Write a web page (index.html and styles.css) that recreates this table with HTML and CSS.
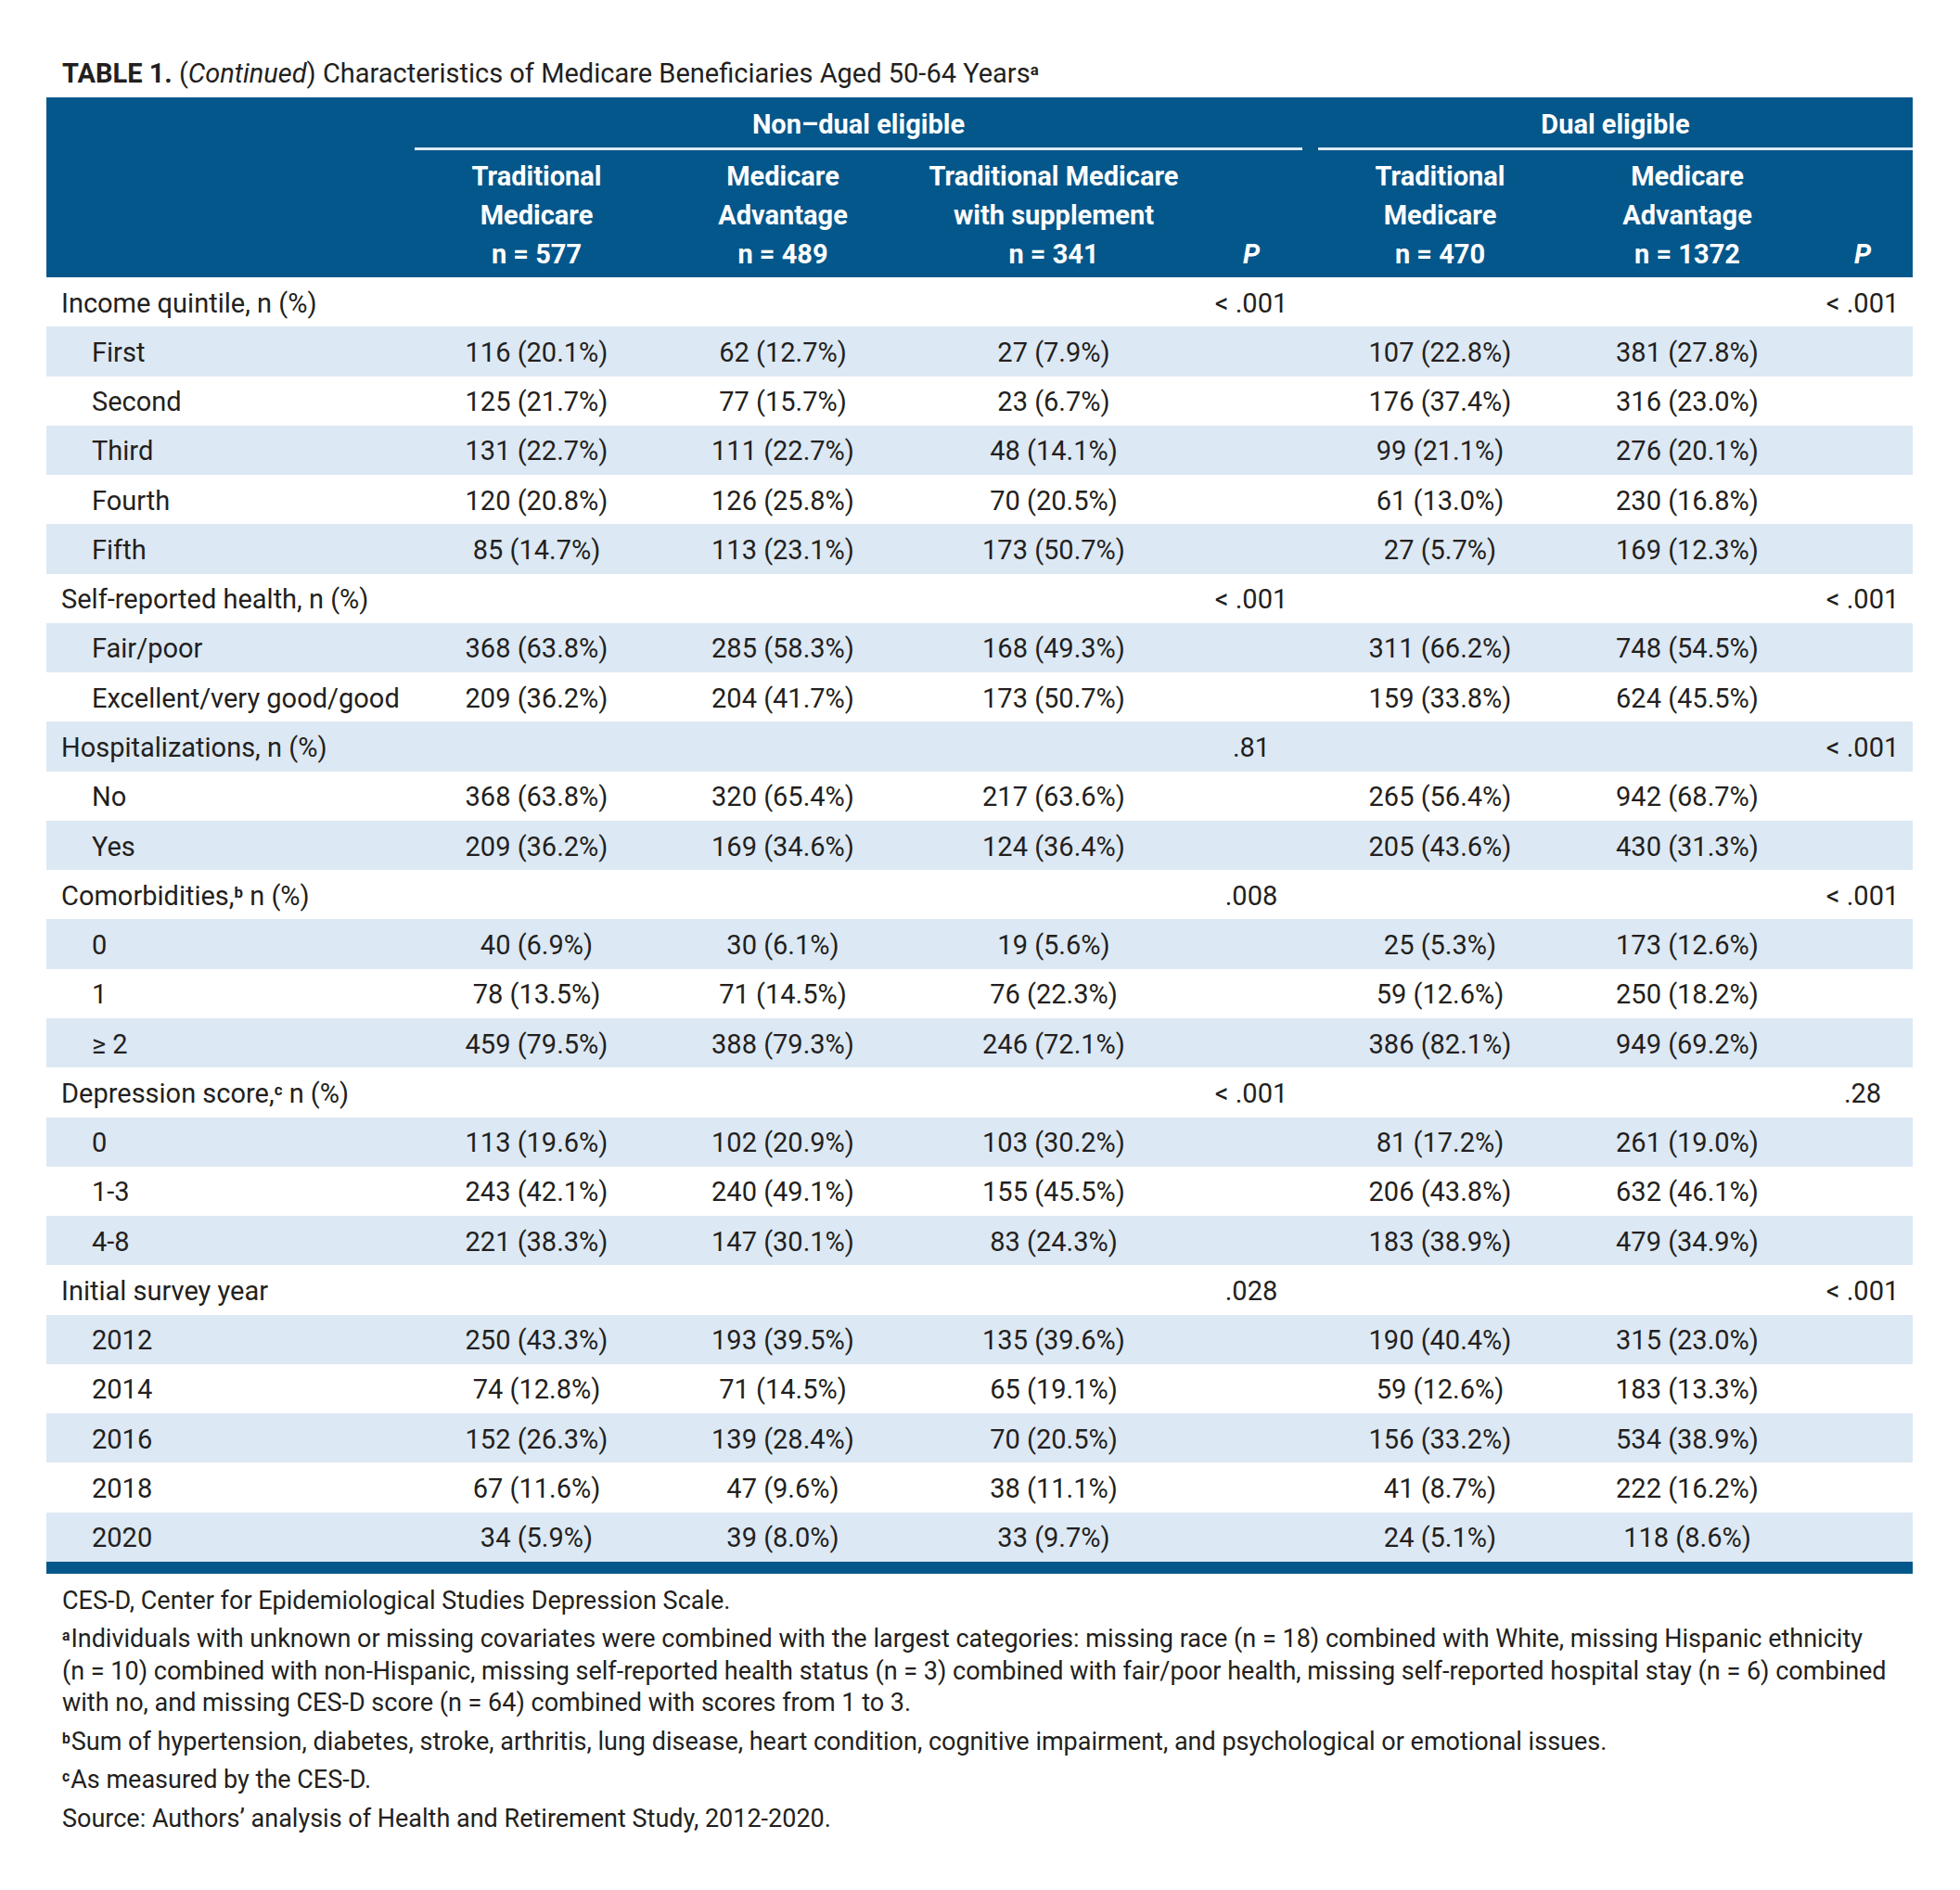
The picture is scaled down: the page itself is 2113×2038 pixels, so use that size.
FILE: index.html
```html
<!DOCTYPE html>
<html lang="en">
<head>
<meta charset="utf-8">
<title>Table 1 (Continued)</title>
<link rel="stylesheet" href="styles.css">
</head>
<body>
<div class="page">
  <p class="caption"><span class="tag">TABLE 1.</span> (<em>Continued</em>) Characteristics of Medicare Beneficiaries Aged 50-64 Years<sup>a</sup></p>
  <table class="data">
    <colgroup>
      <col class="c-label"><col class="c-tm"><col class="c-ma"><col class="c-tms"><col class="c-p1"><col class="c-gap"><col class="c-tm2"><col class="c-ma2"><col class="c-p2">
    </colgroup>
    <thead>
      <tr class="groups">
        <th></th>
        <th colspan="4" class="group">Non–dual eligible</th>
        <th></th>
        <th colspan="3" class="group">Dual eligible</th>
      </tr>
      <tr class="cols">
        <th></th>
        <th>Traditional<br>Medicare<br>n = 577</th>
        <th>Medicare<br>Advantage<br>n = 489</th>
        <th>Traditional Medicare<br>with supplement<br>n = 341</th>
        <th class="p"><em>P</em></th>
        <th></th>
        <th>Traditional<br>Medicare<br>n = 470</th>
        <th>Medicare<br>Advantage<br>n = 1372</th>
        <th class="p"><em>P</em></th>
      </tr>
    </thead>
    <tbody>
      <tr class="cat"><td>Income quintile, n (%)</td><td></td><td></td><td></td><td>&lt; .001</td><td></td><td></td><td></td><td>&lt; .001</td></tr>
      <tr><td>First</td><td>116 (20.1%)</td><td>62 (12.7%)</td><td>27 (7.9%)</td><td></td><td></td><td>107 (22.8%)</td><td>381 (27.8%)</td><td></td></tr>
      <tr><td>Second</td><td>125 (21.7%)</td><td>77 (15.7%)</td><td>23 (6.7%)</td><td></td><td></td><td>176 (37.4%)</td><td>316 (23.0%)</td><td></td></tr>
      <tr><td>Third</td><td>131 (22.7%)</td><td>111 (22.7%)</td><td>48 (14.1%)</td><td></td><td></td><td>99 (21.1%)</td><td>276 (20.1%)</td><td></td></tr>
      <tr><td>Fourth</td><td>120 (20.8%)</td><td>126 (25.8%)</td><td>70 (20.5%)</td><td></td><td></td><td>61 (13.0%)</td><td>230 (16.8%)</td><td></td></tr>
      <tr><td>Fifth</td><td>85 (14.7%)</td><td>113 (23.1%)</td><td>173 (50.7%)</td><td></td><td></td><td>27 (5.7%)</td><td>169 (12.3%)</td><td></td></tr>
      <tr class="cat"><td>Self-reported health, n (%)</td><td></td><td></td><td></td><td>&lt; .001</td><td></td><td></td><td></td><td>&lt; .001</td></tr>
      <tr><td>Fair/poor</td><td>368 (63.8%)</td><td>285 (58.3%)</td><td>168 (49.3%)</td><td></td><td></td><td>311 (66.2%)</td><td>748 (54.5%)</td><td></td></tr>
      <tr><td>Excellent/very good/good</td><td>209 (36.2%)</td><td>204 (41.7%)</td><td>173 (50.7%)</td><td></td><td></td><td>159 (33.8%)</td><td>624 (45.5%)</td><td></td></tr>
      <tr class="cat"><td>Hospitalizations, n (%)</td><td></td><td></td><td></td><td>.81</td><td></td><td></td><td></td><td>&lt; .001</td></tr>
      <tr><td>No</td><td>368 (63.8%)</td><td>320 (65.4%)</td><td>217 (63.6%)</td><td></td><td></td><td>265 (56.4%)</td><td>942 (68.7%)</td><td></td></tr>
      <tr><td>Yes</td><td>209 (36.2%)</td><td>169 (34.6%)</td><td>124 (36.4%)</td><td></td><td></td><td>205 (43.6%)</td><td>430 (31.3%)</td><td></td></tr>
      <tr class="cat"><td>Comorbidities,<sup>b</sup> n (%)</td><td></td><td></td><td></td><td>.008</td><td></td><td></td><td></td><td>&lt; .001</td></tr>
      <tr><td>0</td><td>40 (6.9%)</td><td>30 (6.1%)</td><td>19 (5.6%)</td><td></td><td></td><td>25 (5.3%)</td><td>173 (12.6%)</td><td></td></tr>
      <tr><td>1</td><td>78 (13.5%)</td><td>71 (14.5%)</td><td>76 (22.3%)</td><td></td><td></td><td>59 (12.6%)</td><td>250 (18.2%)</td><td></td></tr>
      <tr><td>≥ 2</td><td>459 (79.5%)</td><td>388 (79.3%)</td><td>246 (72.1%)</td><td></td><td></td><td>386 (82.1%)</td><td>949 (69.2%)</td><td></td></tr>
      <tr class="cat"><td>Depression score,<sup>c</sup> n (%)</td><td></td><td></td><td></td><td>&lt; .001</td><td></td><td></td><td></td><td>.28</td></tr>
      <tr><td>0</td><td>113 (19.6%)</td><td>102 (20.9%)</td><td>103 (30.2%)</td><td></td><td></td><td>81 (17.2%)</td><td>261 (19.0%)</td><td></td></tr>
      <tr><td>1-3</td><td>243 (42.1%)</td><td>240 (49.1%)</td><td>155 (45.5%)</td><td></td><td></td><td>206 (43.8%)</td><td>632 (46.1%)</td><td></td></tr>
      <tr><td>4-8</td><td>221 (38.3%)</td><td>147 (30.1%)</td><td>83 (24.3%)</td><td></td><td></td><td>183 (38.9%)</td><td>479 (34.9%)</td><td></td></tr>
      <tr class="cat"><td>Initial survey year</td><td></td><td></td><td></td><td>.028</td><td></td><td></td><td></td><td>&lt; .001</td></tr>
      <tr><td>2012</td><td>250 (43.3%)</td><td>193 (39.5%)</td><td>135 (39.6%)</td><td></td><td></td><td>190 (40.4%)</td><td>315 (23.0%)</td><td></td></tr>
      <tr><td>2014</td><td>74 (12.8%)</td><td>71 (14.5%)</td><td>65 (19.1%)</td><td></td><td></td><td>59 (12.6%)</td><td>183 (13.3%)</td><td></td></tr>
      <tr><td>2016</td><td>152 (26.3%)</td><td>139 (28.4%)</td><td>70 (20.5%)</td><td></td><td></td><td>156 (33.2%)</td><td>534 (38.9%)</td><td></td></tr>
      <tr><td>2018</td><td>67 (11.6%)</td><td>47 (9.6%)</td><td>38 (11.1%)</td><td></td><td></td><td>41 (8.7%)</td><td>222 (16.2%)</td><td></td></tr>
      <tr><td>2020</td><td>34 (5.9%)</td><td>39 (8.0%)</td><td>33 (9.7%)</td><td></td><td></td><td>24 (5.1%)</td><td>118 (8.6%)</td><td></td></tr>
    </tbody>
  </table>
  <div class="notes">
    <p>CES-D, Center for Epidemiological Studies Depression Scale.</p>
    <p><sup>a</sup>Individuals with unknown or missing covariates were combined with the largest categories: missing race (n&nbsp;=&nbsp;18) combined with White, missing Hispanic ethnicity (n&nbsp;=&nbsp;10) combined with non-Hispanic, missing self-reported health status (n&nbsp;=&nbsp;3) combined with fair/poor health, missing self-reported hospital stay (n&nbsp;=&nbsp;6) combined with no, and missing CES-D score (n&nbsp;=&nbsp;64) combined with scores from 1 to 3.</p>
    <p><sup>b</sup>Sum of hypertension, diabetes, stroke, arthritis, lung disease, heart condition, cognitive impairment, and psychological or emotional issues.</p>
    <p><sup>c</sup>As measured by the CES-D.</p>
    <p>Source: Authors’ analysis of Health and Retirement Study, 2012-2020.</p>
  </div>
</div>
</body>
</html>
```

FILE: styles.css
```css
html, body {
  margin: 0;
  padding: 0;
  background: #ffffff;
}

body {
  font-family: Roboto, "Liberation Sans", sans-serif;
  color: #231f20;
}

.page {
  width: 2012px;
  padding: 62px 51px 40px 50px;
}

.caption {
  margin: 0 0 8px 0;
  padding-left: 17px;
  font-size: 29px;
  line-height: 35px;
}

.caption .tag {
  font-weight: 700;
}

.caption sup,
.data sup,
.notes sup {
  font-size: 0.58em;
  font-weight: 700;
  line-height: 1;
  vertical-align: 0.45em;
}

.notes sup {
  margin-right: 1px;
}

.data {
  width: 2012px;
  table-layout: fixed;
  border-collapse: separate;
  border-spacing: 0;
  font-size: 29px;
  border-bottom: 13px solid #04578b;
}

.c-label { width: 397px; }
.c-tm { width: 263px; }
.c-ma { width: 268px; }
.c-tms { width: 316px; }
.c-p1 { width: 110px; }
.c-gap { width: 17px; }
.c-tm2 { width: 263px; }
.c-ma2 { width: 270px; }
.c-p2 { width: 108px; }

.data thead {
  background: #04578b;
  color: #ffffff;
}

.data th {
  font-weight: 700;
  line-height: 42px;
  text-align: center;
  padding: 0;
}

.groups th {
  padding: 8px 0 4px;
}

.groups th.group {
  border-bottom: 3px solid #dde9f4;
}

.cols th {
  padding: 7px 0 4px;
  vertical-align: bottom;
}

.data td {
  height: 50.27px;
  padding: 3px 0 0;
  text-align: center;
  vertical-align: middle;
  line-height: 35px;
  white-space: nowrap;
}

.data tbody tr:nth-child(even) {
  background: #dce8f4;
}

.data td:first-child {
  text-align: left;
  padding-left: 49px;
}

.data tr.cat td:first-child {
  padding-left: 16px;
}

.notes {
  margin-top: 12px;
  padding-left: 17px;
  font-size: 27px;
  line-height: 34.5px;
}

.notes p {
  margin: 0 0 7px 0;
}
```
